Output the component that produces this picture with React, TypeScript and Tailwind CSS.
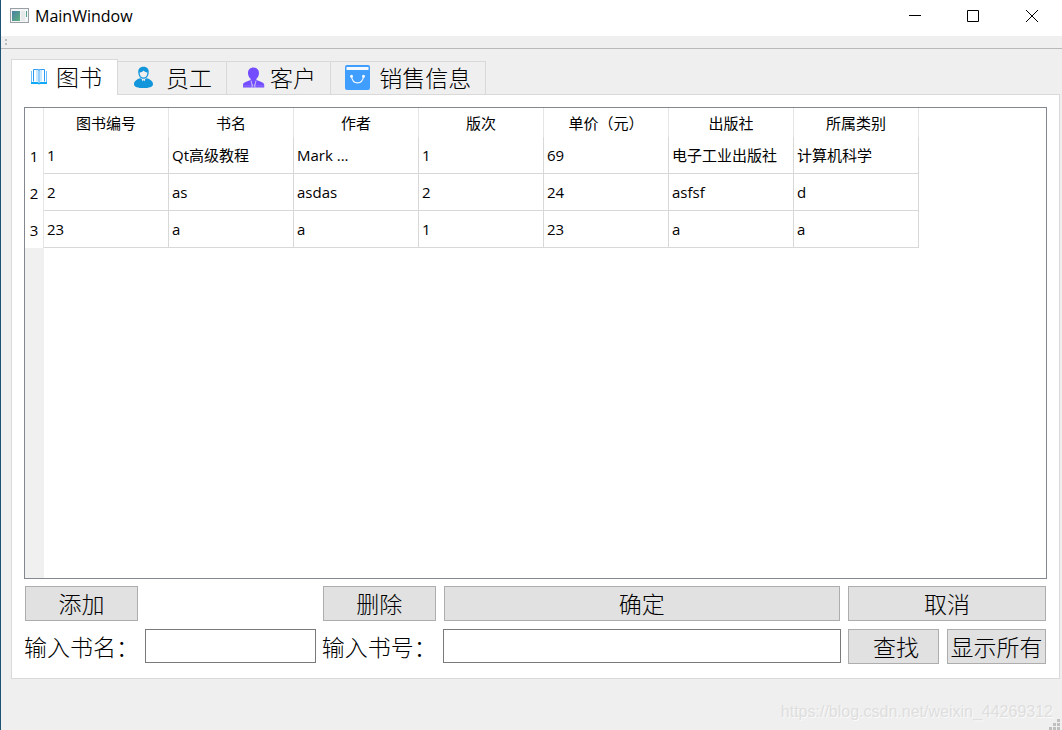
import React, { useState } from 'react';

const LARGE = "font-['Noto_Sans_CJK_SC',_sans-serif] font-light text-[23px] leading-[32px]";

const COLUMNS = ['图书编号', '书名', '作者', '版次', '单价（元）', '出版社', '所属类别'];

const BOOKS = [
  ['1', 'Qt高级教程', 'Mark ...', '1', '69', '电子工业出版社', '计算机科学'],
  ['2', 'as', 'asdas', '2', '24', 'asfsf', 'd'],
  ['23', 'a', 'a', '1', '23', 'a', 'a'],
];

function BookIcon() {
  return (
    <svg viewBox="1 0 25 25" className="w-[25px] h-[25px] shrink-0" fill="none">
      <path d="M5.500 7v11.500M20.500 7v11.500" stroke="#6cc0fb" />
      <path d="M7.500 17.500v-12H12c.6 0 1 .3 1 .8 0-.5.4-.8 1-.8h4.500v12" stroke="#2b9cf5" />
      <path d="M11 5.500v12M15 5.500v12" stroke="#7cc6fb" strokeWidth=".8" />
      <path d="M13 6v12" stroke="#2b9cf5" />
      <path d="M5 19h6.500c.6 0 .9.500 1.500.5s.9-.5 1.500-.5H21" stroke="#12a8f5" strokeWidth="1.800" />
    </svg>
  );
}

function StaffIcon() {
  return (
    <svg viewBox="1 0 25 25" className="w-[25px] h-[25px] shrink-0">
      <path d="M7.400 8.500C6.600 4.200 8.800 1.800 12.500 1.800s5.900 2.400 5.100 6.700c-.4 2.900-2.300 5.300-5.100 5.300S7.800 11.400 7.400 8.500z" fill="#1296db" />
      <path d="M8.600 7.400c2.300-.2 3.100-.8 3.900-1.900.9 1.200 2 1.800 3.900 1.900 0 2.900-1.500 5.100-3.900 5.100s-3.900-2.200-3.900-5.100z" fill="#efefef" />
      <path d="M9.500 13.300c-3.600.8-6.500 3-6.500 5.900 0 2.600 4.200 3.900 9.500 3.900s9.500-1.300 9.500-3.900c0-2.900-2.900-5.100-6.500-5.900l-3 1.700z" fill="#1296db" />
      <path d="M10.400 13.200l1.200 3.300.9-1.500.9 1.500 1.200-3.300-2.100 1.400z" fill="#efefef" />
    </svg>
  );
}

function CustomerIcon() {
  return (
    <svg viewBox="0 0 25 25" className="w-[25px] h-[25px] shrink-0">
      <path d="M12.500 2.400c3.300 0 5.500 2.200 5.500 5.500 0 2.300-1 4.500-2.600 5.800v1.200c3.400 1.400 7.400 2.100 7.800 4.500v3.200H2v-3.200c.4-2.400 4.300-3.100 7.600-4.500v-1.200C8 12.400 7 10.200 7 7.900c0-3.300 2.200-5.500 5.500-5.500z" fill="#734dff" />
      <path d="M2 20.900h21.200" stroke="#a593ff" strokeWidth=".5" />
      <path d="M10 15.600l1 4.400M15 15.600l-1 4.400M11.500 19.500l-.6 3M13.500 19.500l.6 3" fill="none" stroke="#efefef" strokeWidth=".7" />
    </svg>
  );
}

function SalesIcon() {
  return (
    <svg viewBox="0 0 25 25" className="w-[25px] h-[25px] shrink-0">
      <rect width="25" height="25" rx="2" fill="#409eff" />
      <path d="M1.500 2h22v3h-22z" fill="#f4f9ff" />
      <path d="M6.500 11.500c.5 4 2.700 6.300 6 6.300s5.500-2.300 6-6.300" fill="none" stroke="#f4f9ff" strokeWidth="1.200" />
      <circle cx="6.500" cy="11.200" r="1.500" fill="#f4f9ff" />
      <circle cx="18.500" cy="11.200" r="1.500" fill="#f4f9ff" />
    </svg>
  );
}

// Some labels carry a leading space, so they keep white-space: pre
const TABS = [
  { icon: BookIcon, label: '图书' },
  { icon: StaffIcon, label: ' 员工' },
  { icon: CustomerIcon, label: '客户' },
  { icon: SalesIcon, label: ' 销售信息' },
];

function TitleBar() {
  return (
    <header className="flex h-9 shrink-0 items-center bg-white pb-1 pl-[9px]">
      <svg viewBox="0 0 19 16" className="w-[19px] h-4" shapeRendering="crispEdges">
        <defs>
          <linearGradient id="pane" x1="0" y1="0" x2="1" y2="1">
            <stop offset="0" stopColor="#4a7fa5" />
            <stop offset="1" stopColor="#5cb07c" />
          </linearGradient>
        </defs>
        <rect x=".5" y=".5" width="18" height="14" fill="#f4f5f6" stroke="#9a9fa5" />
        <rect x="2" y="3" width="8" height="10" fill="url(#pane)" />
        <rect x="11" y="3" width="4" height="10" fill="#e6e8ea" />
        <rect x="16" y="3" width="1" height="6" fill="#55a58c" />
      </svg>
      <h1 className="ml-[6px] flex-1 text-[16px] leading-5">MainWindow</h1>
      <button aria-label="Minimize" className="flex h-full w-[58px] items-center justify-center">
        <svg viewBox="0 0 12 12" className="w-3 h-3" stroke="#000"><path d="M0 5.500h12" /></svg>
      </button>
      <button aria-label="Maximize" className="flex h-full w-[58px] items-center justify-center">
        <svg viewBox="0 0 12 12" className="w-3 h-3" stroke="#000" fill="none"><path d="M.5.5h11v11H.5z" /></svg>
      </button>
      <button aria-label="Close" className="flex h-full w-[60px] items-center justify-center">
        <svg viewBox="0 0 12 12" className="w-3 h-3" stroke="#000"><path d="M0 0l12 12M12 0L0 12" /></svg>
      </button>
    </header>
  );
}

function BookTable() {
  return (
    <div className="flex flex-1 flex-col overflow-auto border border-[#828790] bg-white">
      <table className="w-[894px] table-fixed border-separate border-spacing-0 text-[15px] leading-5">
        <thead>
          <tr className="h-[29px]">
            <td className="w-[19px] border-r border-[#e5e5e5]" />
            {COLUMNS.map((column) => (
              <th key={column} scope="col" className="w-[125px] border-r border-[#e5e5e5] p-0 text-center font-normal">
                {column}
              </th>
            ))}
          </tr>
        </thead>
        <tbody>
          {BOOKS.map((book, row) => (
            <tr key={book[0]} className="h-[37px]">
              <th scope="row" className="border-r border-[#e5e5e5] p-0 text-center font-normal">{row + 1}</th>
              {book.map((value, i) => (
                <td key={i} className="truncate border-r border-b border-[#d8d8d8] py-0 pr-1 pl-[3px]">{value}</td>
              ))}
            </tr>
          ))}
        </tbody>
      </table>
      <div className="w-[19px] flex-1 bg-[#f0f0f0]" />
    </div>
  );
}

const BUTTON = 'mx-px h-[35px] border border-[#adadad] bg-[#e1e1e1] pb-[2px] whitespace-pre text-center hover:border-[#0078d7] hover:bg-[#e5f1fb]';
const INPUT = 'h-[34px] w-full min-w-0 border border-[#7a7a7a] bg-white px-1 outline-none focus:border-[#0078d7]';
const LABEL = 'self-center pb-[2px] whitespace-nowrap';

export default function App() {
  const [activeTab, setActiveTab] = useState(0);
  const [bookName, setBookName] = useState('');
  const [bookId, setBookId] = useState('');

  return (
    <div className="flex min-h-screen flex-col border-l border-[#1b5276] bg-[#efefef] font-['Open_Sans','Noto_Sans_CJK_SC',_sans-serif] text-black">
      <TitleBar />

      {/* Empty tool bar with its drag handle */}
      <div className="flex h-[13px] shrink-0 items-center border-b border-[#b9b9b9] pl-1">
        <div className="flex flex-col gap-[2px]">
          <span className="h-[2px] w-[2px] bg-[#bdbdbd]" />
          <span className="h-[2px] w-[2px] bg-[#bdbdbd]" />
        </div>
      </div>

      <main className="flex flex-1 flex-col pt-[10px] pr-[2px] pl-[10px]">
        <div role="tablist" className={`z-10 -mb-px flex items-end ${LARGE}`}>
          {TABS.map((tab, i) => (
            <button
              key={tab.label}
              role="tab"
              aria-selected={i === activeTab}
              onClick={() => setActiveTab(i)}
              className={`flex items-center gap-1 border-[#d9d9d9] whitespace-pre ${
                i === activeTab
                  ? 'h-9 border-x border-t bg-white px-[15px] pb-[3px]'
                  : 'h-[34px] border-y border-r bg-[#efefef] px-[14px] pb-[2px]'
              }`}
            >
              <tab.icon />
              {tab.label}
            </button>
          ))}
        </div>

        <section role="tabpanel" className="flex flex-1 flex-col border border-[#d9d9d9] bg-white px-3 pt-3 pb-[14px]">
          <BookTable />
          <form
            onSubmit={(e) => e.preventDefault()}
            className={`mt-[7px] grid grid-cols-[115px_3fr_115px_7fr_93px_101px] gap-x-[6px] gap-y-2 ${LARGE}`}
          >
            <button type="button" className={BUTTON}>添加</button>
            <button type="button" className={`col-start-3 ${BUTTON}`}>删除</button>
            <button type="button" className={BUTTON}>确定</button>
            <button type="button" className={`col-span-2 ${BUTTON}`}>取消</button>

            <label htmlFor="book-name" className={LABEL}>输入书名：</label>
            <input id="book-name" value={bookName} onChange={(e) => setBookName(e.target.value)} className={INPUT} />
            <label htmlFor="book-id" className={LABEL}>输入书号：</label>
            <input id="book-id" value={bookId} onChange={(e) => setBookId(e.target.value)} className={INPUT} />
            <button type="submit" className={BUTTON}>{' 查找'}</button>
            <button type="button" className={BUTTON}>显示所有</button>
          </form>
        </section>
      </main>

      <footer className="relative flex h-[51px] shrink-0 items-end justify-end pr-[9px] pb-2">
        <p className="font-['Liberation_Sans',_sans-serif] text-[16px] leading-5 text-[#dedede] [text-shadow:1px_1px_0_#fafafa]">
          https://blog.csdn.net/weixin_44269312
        </p>
        <svg viewBox="0 0 11 11" className="absolute right-[2px] bottom-0 w-[11px] h-[11px]" fill="#bfbfbf">
          <path d="M8 0h3v3H8zM4 4h3v3H4zM8 4h3v3H8zM0 8h3v3H0zM4 8h3v3H4zM8 8h3v3H8z" />
        </svg>
      </footer>
    </div>
  );
}
